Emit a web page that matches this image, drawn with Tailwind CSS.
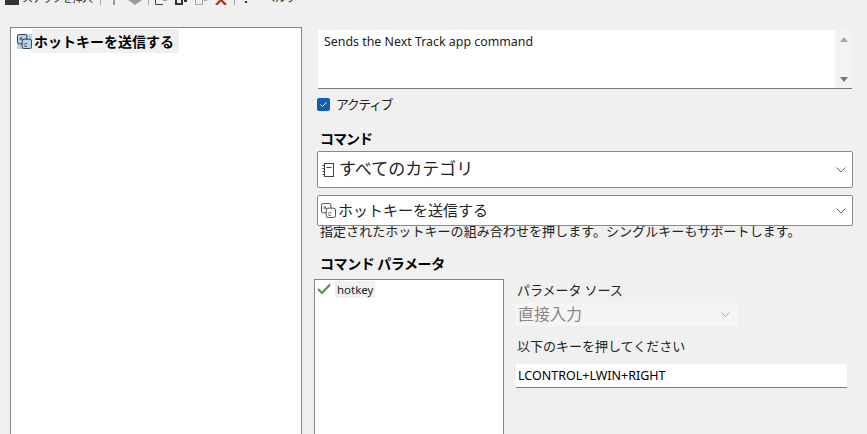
<!DOCTYPE html>
<html lang="ja">
<head>
    <meta charset="UTF-8">
    <title>ホットキーを送信する</title>
    <script src="https://cdn.jsdelivr.net/npm/@tailwindcss/browser@4"></script>
</head>
<body class="m-0 bg-[#f0f0f0] overflow-hidden font-['Noto_Sans_CJK_JP','Noto_Sans',sans-serif] text-black">
<div class="w-[867px] h-[434px] overflow-hidden relative">
    <!-- toolbar, cut off by the top of the window -->
    <div class="h-[5px] overflow-hidden flex items-end pl-[5px] text-[#333]">
        <svg class="w-[14px] h-[5px] shrink-0" viewBox="0 0 14 5"><rect x="0" y="0" width="14" height="5" fill="#333"/></svg>
        <span class="ml-[3px] w-[72px] text-[11px] leading-[14px] tracking-[-1px] whitespace-nowrap h-[5px] flex items-end"><span class="mb-[1px]">ステップを挿入</span></span>
        <span class="w-px h-[5px] bg-[#aaa] ml-[6px]"></span>
        <svg class="w-[6px] h-[5px] ml-[10px]" viewBox="0 0 6 5"><rect x="2" y="0" width="2" height="5" fill="#9a9a9a"/></svg>
        <svg class="w-[14px] h-[5px] ml-[11px]" viewBox="0 0 14 5"><path d="M0 0 H14 L7 5 Z" fill="#9a9a9a"/></svg>
        <span class="w-px h-[5px] bg-[#aaa] ml-[6px]"></span>
        <svg class="w-[13px] h-[5px] ml-[6px]" viewBox="0 0 13 5" fill="none" stroke="#444"><path d="M0.5 0 V4.5 H8 M8 0 L12 0"/></svg>
        <svg class="w-[12px] h-[5px] ml-[7px]" viewBox="0 0 12 5"><path d="M0 0 H8 V5 H0 Z M2 0 V3 H6 V0 Z" fill="#333" fill-rule="evenodd"/><rect x="9" y="0" width="3" height="2" fill="#333"/></svg>
        <svg class="w-[12px] h-[5px] ml-[8px]" viewBox="0 0 12 5" fill="none" stroke="#a5a5a5"><path d="M0.5 0 V4.5 H7.5 V0 M9 0.5 H12"/></svg>
        <svg class="w-[14px] h-[5px] ml-[7px]" viewBox="0 0 14 5" fill="none" stroke="#a83a1c" stroke-width="2.4"><path d="M7 0 L2 5 M7 0 L12 5"/></svg>
        <span class="w-px h-[5px] bg-[#aaa] ml-[6px]"></span>
        <span class="w-[2px] h-[2px] bg-[#333] ml-[10px] mb-[2px]"></span>
        <span class="ml-[17px] text-[11px] leading-[14px] whitespace-nowrap h-[5px] flex items-end"><span class="mb-[1px]">ヘルプ</span></span>
    </div>

    <div class="flex items-start pl-[10px] pt-[22px] gap-[15px]">
        <!-- step list -->
        <div class="w-[292px] h-[420px] shrink-0 bg-white border border-[#82828c] pl-[6px] pt-[1px]">
            <div class="flex items-center h-[24px]">
                <svg class="w-[15px] h-[15px] shrink-0 bg-[#b5d5ea]" viewBox="0 0 16 16" fill="none" stroke="#333"><rect x="0.5" y="0.5" width="10" height="10" rx="2"/><rect x="5.5" y="5.5" width="10" height="10" rx="2" fill="#b5d5ea"/><text x="7.5" y="13.5" font-size="7" font-family="Liberation Sans" fill="#333" stroke="none">c</text><text x="2.5" y="6.5" font-size="6" font-family="Liberation Sans" fill="#333" stroke="none">a</text></svg>
                <span class="bg-[#f0f0f0] text-[14px] leading-[24px] font-bold pl-[2px] pr-[5px]">ホットキーを送信する</span>
            </div>
        </div>

        <div class="w-[536px] shrink-0 pt-[3px]">
            <!-- description -->
            <div class="relative h-[59px] bg-white border-b border-[#7a7a7a] ml-[1px] mr-[1px] pl-[6px] pt-[3px] font-['Noto_Sans','DejaVu_Sans',sans-serif] text-[12.4px] leading-[18px] text-[#222]">
                Sends the Next Track app command
                <div class="absolute right-0 top-0 bottom-0 w-[17px] bg-[#f3f3f3] flex flex-col justify-between items-center pt-[7px] pb-[6px]">
                    <span class="w-0 h-0 border-x-[4px] border-x-transparent border-b-[5px] border-b-[#a5a5a5]"></span>
                    <span class="w-0 h-0 border-x-[4px] border-x-transparent border-t-[5px] border-t-[#757575]"></span>
                </div>
            </div>
            <!-- active checkbox -->
            <div class="flex items-center gap-[6px] h-[30px]">
                <span class="w-[13px] h-[13px] rounded-[2px] bg-[#0f5fb5] flex items-center justify-center">
                    <svg class="w-[9px] h-[9px]" viewBox="0 0 9 9" fill="none" stroke="#fff"><path d="M1.5 4.5 L3.5 6.5 L7.5 2.5"/></svg>
                </span>
                <span class="text-[13px] tracking-[-1.5px] leading-[20px] text-[#222]">アクティブ</span>
            </div>
            <!-- command -->
            <div class="text-[14px] tracking-[-1px] font-bold leading-[20px] pl-[3px] mt-[9px]">コマンド</div>
            <div class="flex items-center h-[37px] mt-[3px] bg-white border border-[#8a8a8a] rounded-[2px] pl-[4px] pr-[6px]">
                <svg class="w-[13px] h-[14px] shrink-0" viewBox="0 0 13 14" fill="none" stroke="#444"><rect x="2.5" y="0.5" width="9" height="13"/><path d="M4.5 4.5 H9.5 M0.5 2.5 H2 M0.5 5.5 H2 M0.5 8.5 H2 M0.5 11.5 H2"/></svg>
                <span class="ml-[4px] mb-[3px] text-[17px] text-[#222]">すべてのカテゴリ</span>
                <svg class="ml-auto w-[10px] h-[6px]" viewBox="0 0 10 6" fill="none" stroke="#666"><path d="M0.5 0.5 L5 5 L9.5 0.5"/></svg>
            </div>
            <div class="flex items-center h-[31px] mt-[7px] bg-white border border-[#8a8a8a] rounded-[2px] pl-[3px] pr-[6px]">
                <svg class="w-[15px] h-[15px] shrink-0" viewBox="0 0 16 16" fill="none" stroke="#444"><rect x="0.5" y="0.5" width="10" height="10" rx="2"/><rect x="5.5" y="5.5" width="10" height="10" rx="2" fill="#fff"/><text x="7.5" y="13.5" font-size="7" font-family="Liberation Sans" fill="#333" stroke="none">c</text><text x="2.5" y="6.5" font-size="6" font-family="Liberation Sans" fill="#333" stroke="none">a</text></svg>
                <span class="ml-[2px] mb-[1px] text-[15px] text-[#222]">ホットキーを送信する</span>
                <svg class="ml-auto w-[10px] h-[6px]" viewBox="0 0 10 6" fill="none" stroke="#666"><path d="M0.5 0.5 L5 5 L9.5 0.5"/></svg>
            </div>
            <div class="h-[16px] overflow-hidden pl-[3px] flex items-end">
                <span class="mb-[2px] text-[13px] leading-[18px] tracking-[0.06px] whitespace-nowrap text-[#222]">指定されたホットキーの組み合わせを押します。シングルキーもサポートします。</span>
            </div>
            <!-- parameters -->
            <div class="text-[14px] tracking-[-0.4px] font-bold leading-[20px] pl-[3px] mt-[11px]">コマンド パラメータ</div>
            <div class="flex items-start mt-[6px] gap-[11px]">
                <div class="w-[190px] h-[160px] shrink-0 bg-white border border-[#82828c] -ml-[3px] pl-[2px] pt-[1px] flex items-start">
                    <svg class="w-[14px] h-[12px] mt-[2px]" viewBox="0 0 14 12" fill="none" stroke="#5e9150" stroke-width="2.2"><path d="M1 6 L5 10 L13 1.5"/></svg>
                    <span class="ml-[4px] bg-[#f0f0f0] px-[2px] h-[17px] font-['Noto_Sans',sans-serif] text-[11.5px] leading-[17px] text-[#222]">hotkey</span>
                </div>
                <div class="w-[331px] shrink-0">
                    <div class="text-[13px] leading-[20px] pl-[2px] mt-[1px] text-[#222]">パラメータ ソース</div>
                    <div class="flex items-center w-[223px] h-[23px] mt-[3px] bg-[#f5f5f5] rounded-[2px] pl-[3px] pr-[8px] text-[#888]">
                        <span class="mb-[3px] text-[16px]">直接入力</span>
                        <svg class="ml-auto w-[9px] h-[5px]" viewBox="0 0 9 5" fill="none" stroke="#aaa"><path d="M0.5 0.5 L4.5 4.5 L8.5 0.5"/></svg>
                    </div>
                    <div class="text-[13px] leading-[20px] pl-[2px] mt-[10px] text-[#222]">以下のキーを押してください</div>
                    <div class="h-[24px] w-[331px] mt-[8px] ml-[1px] bg-white border-b border-[#7a7a7a] pl-[2px] font-['Noto_Sans',sans-serif] text-[12.5px] leading-[23px]">LCONTROL+LWIN+RIGHT</div>
                </div>
            </div>
        </div>
    </div>
</div>
</body>
</html>
